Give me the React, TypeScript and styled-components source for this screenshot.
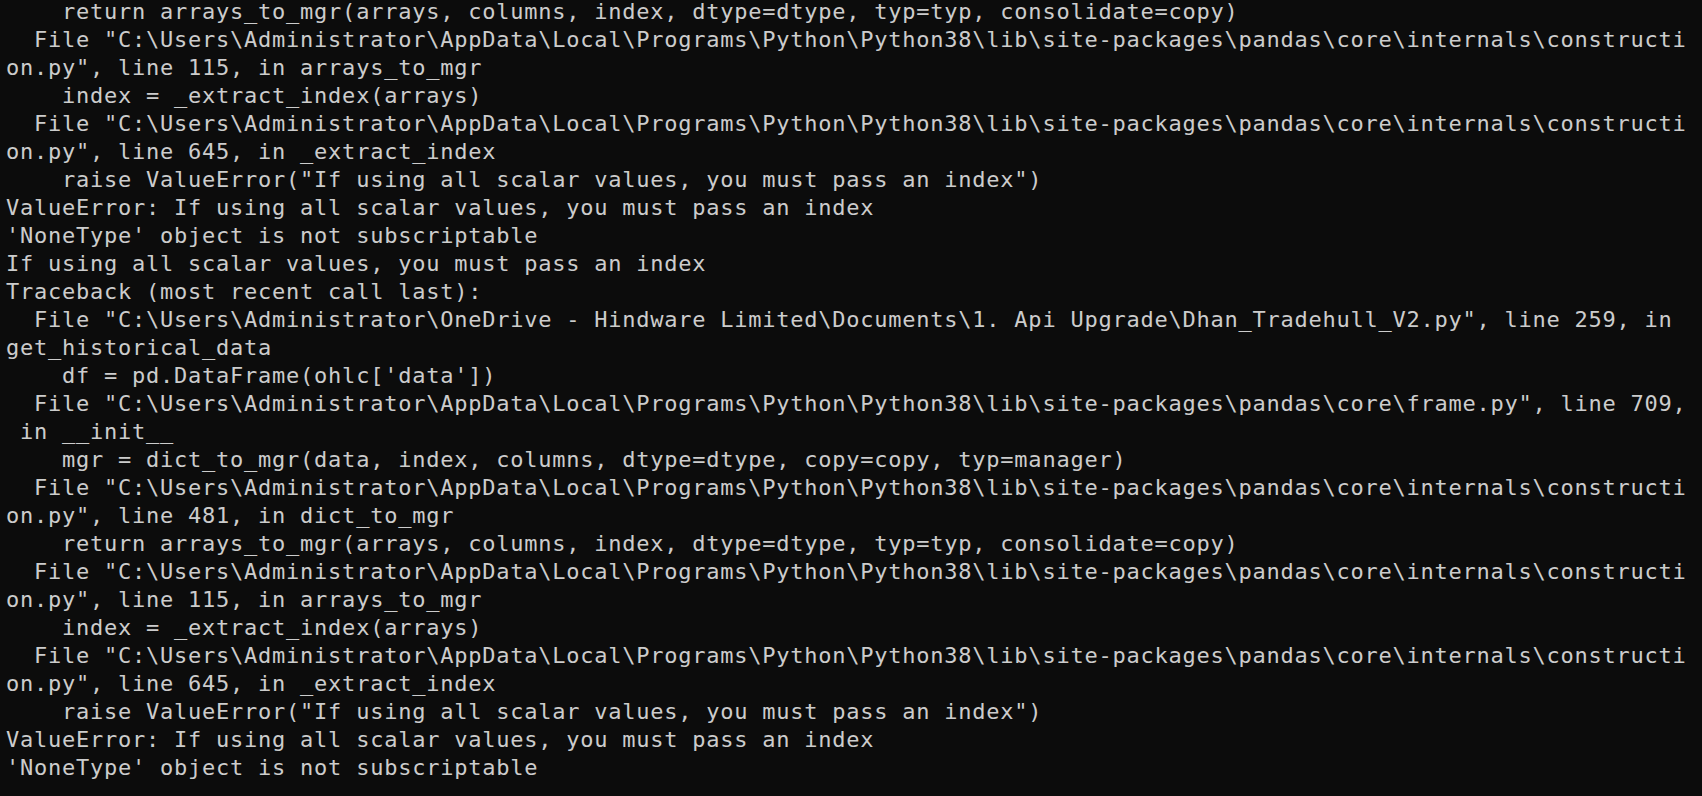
import React from 'react';
import styled, { createGlobalStyle } from 'styled-components';

const GlobalStyle = createGlobalStyle`
  html, body {
    margin: 0;
    padding: 0;
    background: #0c0c0c;
    overflow: hidden;
  }
`;

const Terminal = styled.div`
  width: 1702px;
  height: 796px;
  background: #0c0c0c;
  overflow: hidden;
  box-sizing: border-box;
  padding-left: 6px;
`;

const Output = styled.div`
  display: flex;
  flex-direction: column;
  margin-top: -2px;
  font-family: 'DejaVu Sans Mono', 'Liberation Mono', monospace;
  font-size: 22px;
  letter-spacing: 0.76px;
  line-height: 28px;
  color: #cccccc;
`;

const Line = styled.div`
  white-space: pre;
  height: 28px;
`;

const SITE = String.raw`C:\Users\Administrator\AppData\Local\Programs\Python\Python38\lib\site-packages\pandas\core`;

const lines: string[] = [
  `    return arrays_to_mgr(arrays, columns, index, dtype=dtype, typ=typ, consolidate=copy)`,
  `  File "${SITE}\\internals\\constructi`,
  `on.py", line 115, in arrays_to_mgr`,
  `    index = _extract_index(arrays)`,
  `  File "${SITE}\\internals\\constructi`,
  `on.py", line 645, in _extract_index`,
  `    raise ValueError("If using all scalar values, you must pass an index")`,
  `ValueError: If using all scalar values, you must pass an index`,
  `'NoneType' object is not subscriptable`,
  `If using all scalar values, you must pass an index`,
  `Traceback (most recent call last):`,
  String.raw`  File "C:\Users\Administrator\OneDrive - Hindware Limited\Documents\1. Api Upgrade\Dhan_Tradehull_V2.py", line 259, in`,
  `get_historical_data`,
  `    df = pd.DataFrame(ohlc['data'])`,
  `  File "${SITE}\\frame.py", line 709,`,
  ` in __init__`,
  `    mgr = dict_to_mgr(data, index, columns, dtype=dtype, copy=copy, typ=manager)`,
  `  File "${SITE}\\internals\\constructi`,
  `on.py", line 481, in dict_to_mgr`,
  `    return arrays_to_mgr(arrays, columns, index, dtype=dtype, typ=typ, consolidate=copy)`,
  `  File "${SITE}\\internals\\constructi`,
  `on.py", line 115, in arrays_to_mgr`,
  `    index = _extract_index(arrays)`,
  `  File "${SITE}\\internals\\constructi`,
  `on.py", line 645, in _extract_index`,
  `    raise ValueError("If using all scalar values, you must pass an index")`,
  `ValueError: If using all scalar values, you must pass an index`,
  `'NoneType' object is not subscriptable`,
];

export default function App() {
  return (
    <>
      <GlobalStyle />
      <Terminal>
        <Output>
          {lines.map((text, i) => (
            <Line key={i}>{text}</Line>
          ))}
        </Output>
      </Terminal>
    </>
  );
}
